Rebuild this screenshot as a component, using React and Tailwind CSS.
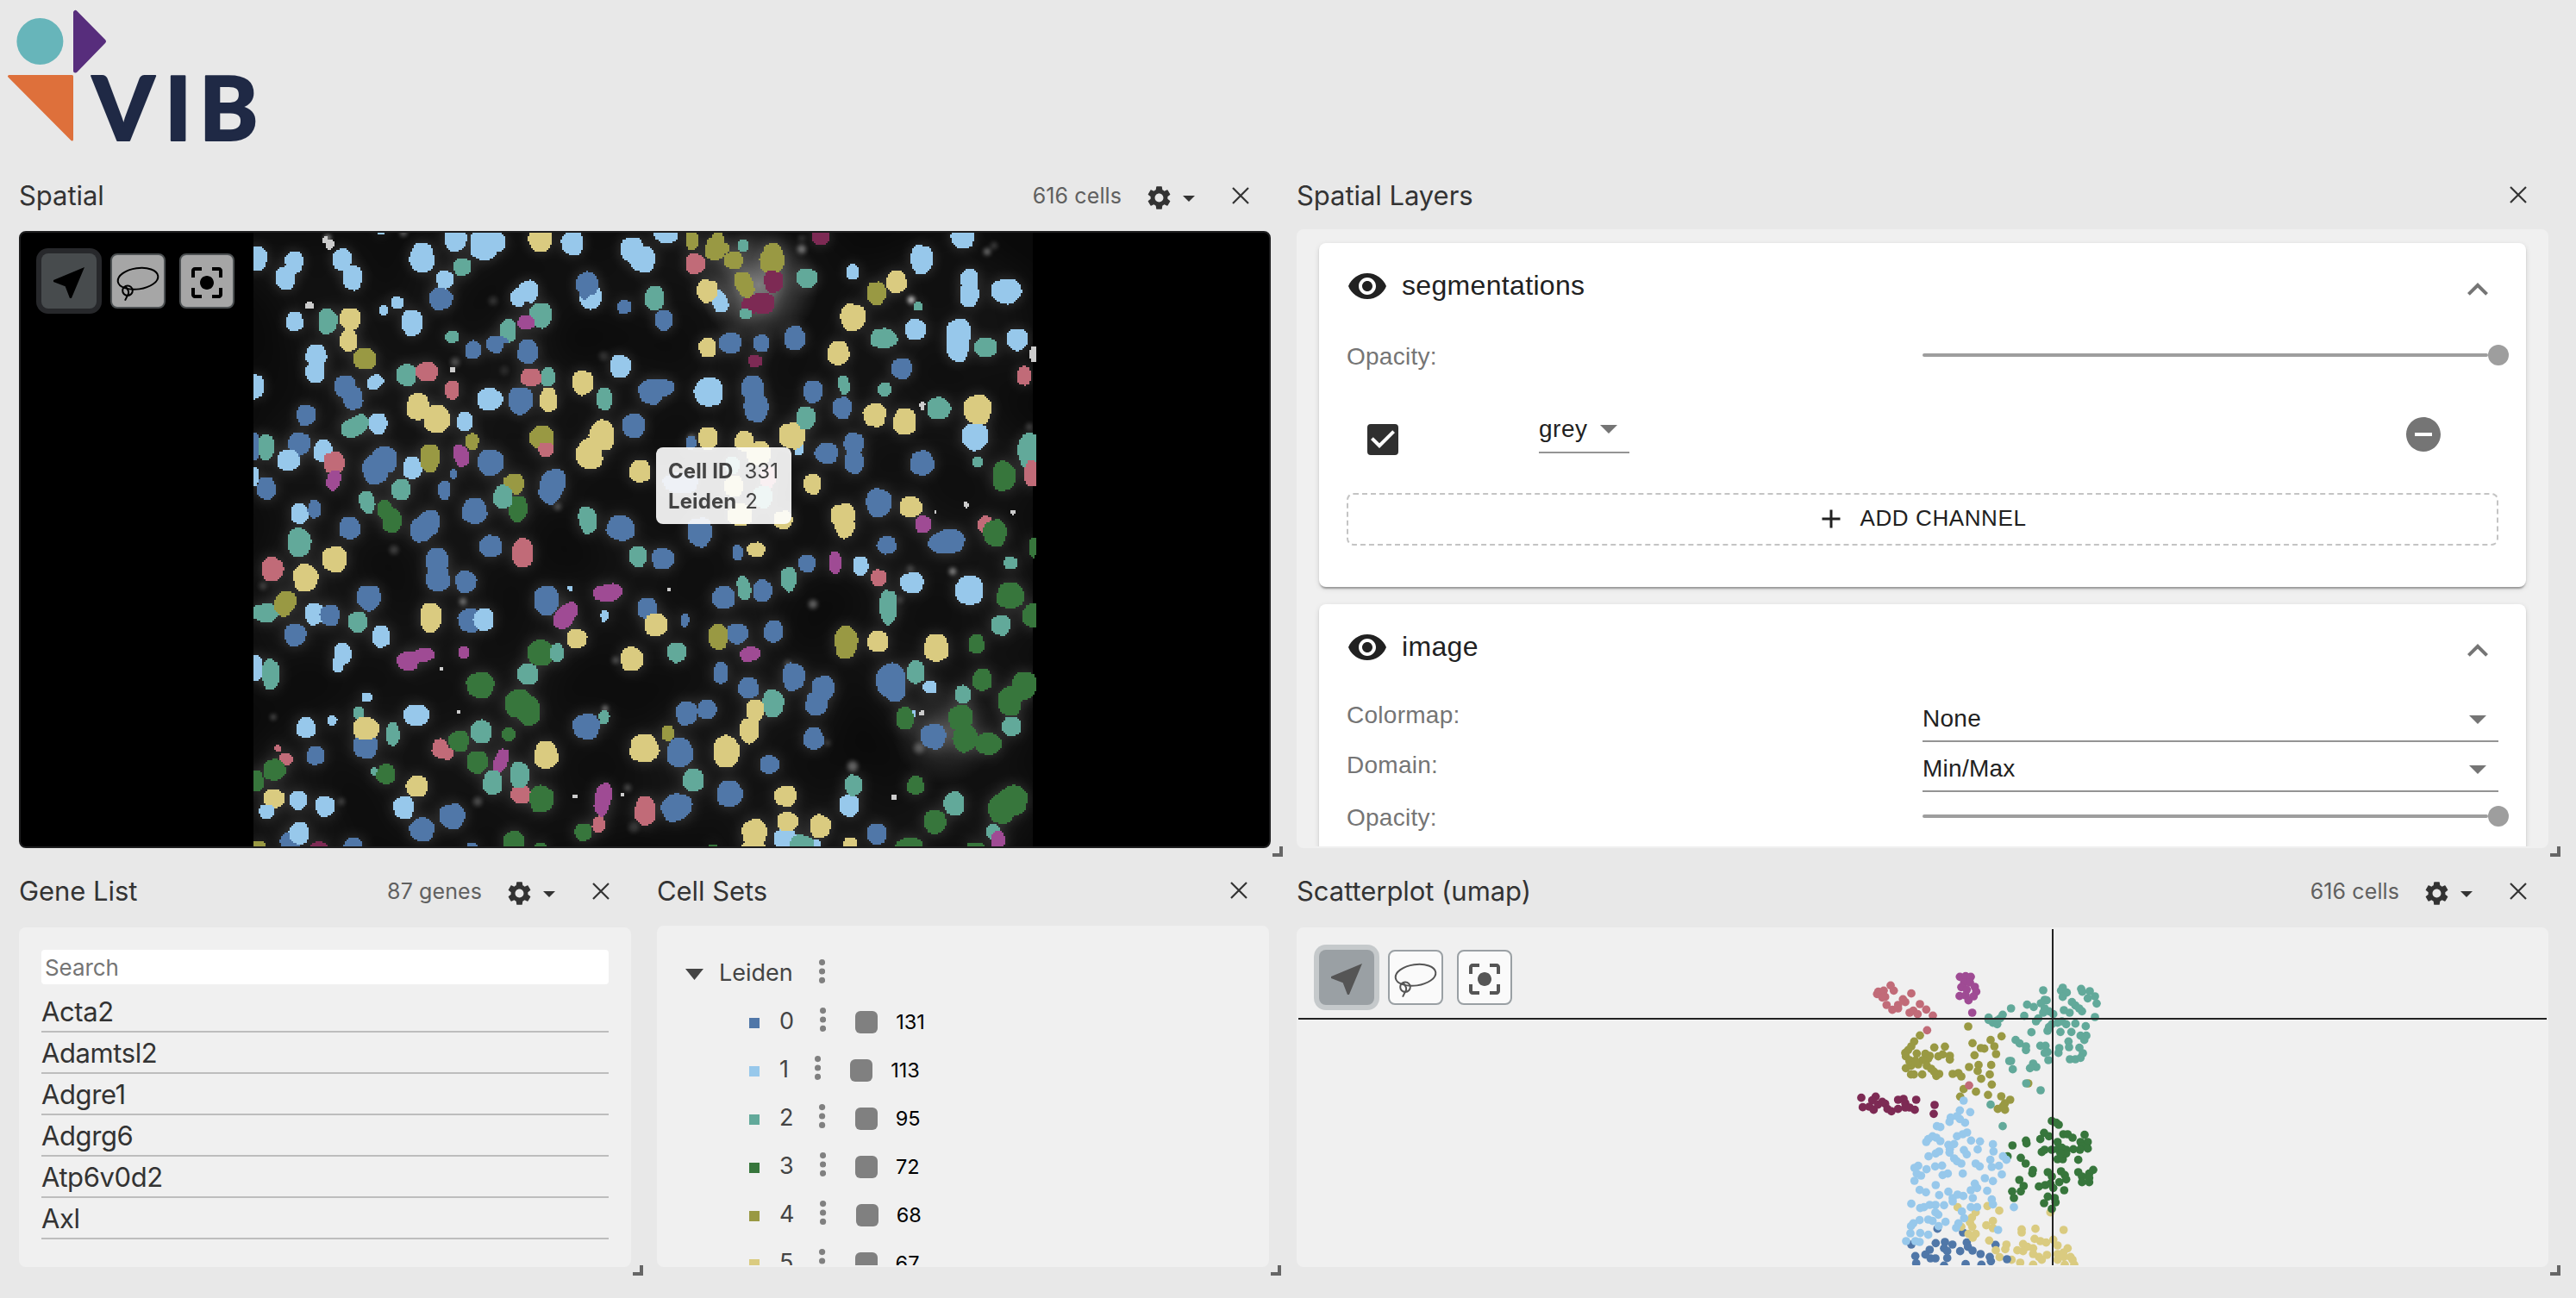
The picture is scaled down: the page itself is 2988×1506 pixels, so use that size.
import React from "react";
import {
  MdNearMe,
  MdCenterFocusStrong,
  MdSettings,
  MdVisibility,
  MdExpandLess,
  MdCheckBox,
  MdArrowDropDown,
  MdRemoveCircle,
  MdAdd,
} from "react-icons/md";

const COLORS = {
  B: "#5077a8",
  L: "#97c8eb",
  T: "#62a99a",
  G: "#37763c",
  O: "#999943",
  Y: "#dacb80",
  R: "#c16b78",
  P: "#9f4b94",
  M: "#7d2a54",
  W: "#cccccc",
};

/* Cell outlines per image tile: colour, centre x, centre y, radius x, radius y, rotation (thirds of a pixel). */
const TILES = [
  {
    x: 280,
    y: 260,
    cells:
      "L,46,120,44,42;L,184,132,31,37;L,154,187,34,41;W,308,70,14,18;W,292,56,10,12;L,351,124,33,39;L,387,187,34,42;L,486,20,18,16;L,629,117,42,51;L,745,50,37,45;L,845,65,49,61;L,880,62,38,38;Y,1040,50,39,46;L,1152,65,37,42;L,1360,90,40,43;L,1396,122,44,44;T,768,149,31,30;L,708,193,30,32;B,694,260,40,38;L,962,255,25,32;L,1000,234,33,38;L,1215,254,39,40;B,1203,208,38,41;B,1193,240,17,22;B,1333,288,24,24;W,237,284,15,12;L,185,339,30,33;T,300,338,33,44;Y,379,331,36,38;Y,372,405,30,38;L,543,273,21,22;L,494,299,15,18;L,594,344,36,45;L,260,456,36,37;L,257,514,34,37;O,429,469,39,37;T,733,392,23,21;B,807,438,27,32;T,928,370,28,41;B,883,418,30,30;B,905,405,24,12;T,1042,317,38,43;P,991,342,30,24;B,997,444,35,42;T,574,525,34,38;R,645,514,38,33;R,733,578,25,33;W,734,507,9,9;R,1008,534,36,31;T,1068,532,24,34;Y,1188,552,36,42;L,1319,495,36,40;T,1264,608,27,39;B,361,566,37,38;B,389,606,33,40;L,465,550,30,24,-30;L,50,565,28,42;B,225,665,33,36;Y,615,636,40,46;Y,681,678,45,48;L,864,609,43,38;B,971,614,42,47;Y,1068,612,30,42;T,395,704,52,32,-30;L,475,695,32,36;L,777,687,27,33;B,1365,702,39,42;Y,1254,736,42,53;Y,1212,800,46,52;O,1045,743,41,41;R,1060,785,27,25;B,50,775,14,48;T,86,777,28,44;B,201,765,38,40;L,164,822,39,36;L,285,790,34,38;R,323,832,36,40;P,321,891,24,34,15;B,497,820,44,46;B,467,855,45,50;L,595,848,32,39;O,656,815,34,48;P,765,806,26,39,-15;O,803,757,23,28;B,867,830,45,45;B,739,870,12,16;L,48,878,12,32;B,87,920,32,39;Y,1387,860,36,39;T,555,924,33,36;B,706,926,21,33;G,962,990,32,46;O,948,904,36,35;T,910,950,34,40;B,1081,912,42,62,20;T,437,968,26,39,-15;G,499,993,26,33;G,524,1032,33,42;L,203,1007,30,35;B,254,992,22,32;B,377,1058,36,39;B,811,999,43,44;B,655,1038,36,43;B,625,1065,37,42;T,1205,1030,31,47,-10;B,1320,1058,48,43,15",
  },
  {
    x: 740,
    y: 260,
    cells:
      "L,98,30,40,36;O,189,55,21,35;O,278,60,20,42;O,268,86,34,40;O,296,84,22,20;T,366,75,18,21;O,332,126,33,30;O,470,105,32,39;O,466,130,43,40;R,200,138,34,35;M,472,200,33,38;M,430,275,46,36;M,390,285,30,30;T,375,312,21,18;O,370,210,30,48,-25;M,636,45,30,27;T,588,189,36,33;L,285,270,26,40,-20;Y,241,232,36,39;T,57,257,33,42;B,90,336,30,36;Y,243,430,30,34;B,321,413,39,36;B,429,415,27,30;B,546,397,36,41;M,408,477,24,21;L,747,166,21,27;L,987,123,38,50;L,1130,45,39,39;Y,899,201,35,39;O,830,240,33,40;T,975,286,16,15;L,1153,192,31,36;L,1153,244,32,44;L,1282,234,52,42;Y,748,324,43,46;T,855,398,46,34;L,966,367,36,36;L,1116,382,42,52;L,1113,425,39,54;T,1210,429,39,33;L,1320,402,37,37;W,1376,453,12,27;R,1344,528,24,33;Y,697,449,37,42;B,918,503,35,36;T,717,560,19,33,-10;T,857,575,24,24;B,46,583,42,44;B,82,570,44,30;L,246,584,48,50;B,399,570,39,42;B,412,640,42,49;B,609,583,33,39;B,711,640,33,38;L,560,782,18,22;Y,537,736,46,45;T,584,675,33,39;Y,824,664,39,41;Y,928,687,40,46;W,990,631,9,15;T,1047,642,40,38;L,1173,740,45,46;Y,1182,645,48,51;T,1370,790,48,62;R,1370,868,25,46;B,185,762,18,24;Y,244,746,33,39;Y,370,756,33,34;Y,420,798,42,42;B,656,797,39,36;B,751,765,34,38;B,753,830,33,39;B,989,832,41,42;T,1183,828,18,20;G,1273,877,40,51;T,328,840,25,30;R,452,880,28,38;B,150,900,60,36;Y,333,912,33,36;T,435,950,33,38;Y,355,1012,42,38;Y,505,1030,33,32;Y,608,905,30,36;B,838,970,44,49;Y,950,984,38,36;Y,714,1015,42,42;Y,720,1050,33,42;P,992,1045,28,30;W,1142,977,8,12;W,1305,1003,8,8;W,1034,1001,3,6;R,1208,1045,26,28;G,1243,1075,40,46;B,215,1072,43,50;B,1065,1110,52,38;B,1090,1103,45,42",
  },
  {
    x: 280,
    y: 620,
    cells:
      "T,201,28,40,49;B,867,41,39,37;R,978,65,36,50;R,108,121,37,41;Y,325,87,42,45;Y,223,151,42,48;T,84,273,46,32;O,152,240,35,44,25;L,254,277,33,37;B,308,281,33,36;B,443,220,41,44;B,187,350,37,39;T,405,306,33,36;L,486,356,31,38;L,352,415,30,37;L,336,452,20,28;B,681,90,39,43;B,684,152,41,46;B,781,165,36,38;Y,659,289,37,51;B,793,299,38,41;L,843,296,34,39;L,50,465,24,45;T,102,487,30,53;P,580,440,38,33;P,630,421,42,23,-10;P,774,411,18,21;W,696,468,6,6;G,832,524,47,45;G,965,590,47,50;G,1000,615,40,50;G,1040,412,44,44;T,1099,412,24,31;T,996,486,36,36;B,1062,230,43,51;P,1128,283,32,52,40;L,1144,188,9,9;P,1276,203,51,30,-8;L,1264,284,13,20;Y,1167,363,34,33;Y,1359,434,39,42;T,1380,77,31,36;L,436,567,18,16;T,408,622,18,22;B,432,738,42,41;Y,434,675,45,39;L,609,630,44,36;T,527,695,23,41;L,225,672,33,35;L,316,647,16,19;R,126,744,12,11;R,155,782,23,21;B,258,770,31,32;G,115,820,38,36;G,50,858,27,36;T,461,824,11,14;G,503,835,32,34;R,692,745,28,33;R,716,764,22,20;G,757,719,35,36;T,834,687,36,40;G,930,696,24,22;G,821,793,37,38;P,903,790,23,46,20;T,874,864,33,42;R,972,905,34,32;T,968,838,33,46;G,1044,921,42,46;Y,1060,768,41,48;B,1201,669,46,44;T,1262,637,18,25;W,1160,912,9,6;W,755,619,6,6;P,1258,922,28,58,12;R,1243,1010,22,28;G,1190,1036,30,30;Y,114,920,36,33;L,88,965,27,25;L,198,926,30,33;L,291,946,34,35;Y,611,877,36,38;L,566,950,35,39;B,734,981,44,43;B,629,1027,42,40;B,172,1070,35,35;L,201,1040,34,38;O,60,1088,26,20;M,270,1090,30,20;B,390,1090,33,34;G,948,1070,36,38;B,801,1090,20,16;G,1040,1090,20,16;W,1326,906,6,6",
  },
  {
    x: 740,
    y: 620,
    cells:
      "B,87,84,39,37;B,348,63,18,27;Y,411,53,31,25;Y,718,-5,24,17;B,866,38,33,31;G,1374,45,14,34;T,1297,99,24,22;B,589,101,30,30;P,687,98,21,39;L,775,110,26,34;R,838,152,27,29;L,954,168,40,36;L,1153,194,48,50;G,1296,213,47,45;T,525,156,27,42;T,368,186,23,42,-10;B,298,220,39,39;B,434,196,33,38;W,106,192,6,6;B,32,258,34,36;Y,63,314,39,39;B,163,299,14,24;T,871,252,30,59;G,1378,282,40,42;T,1263,316,34,35;B,345,346,38,34;O,279,356,33,44;B,472,338,33,38;O,724,375,39,56;Y,834,373,36,37;Y,1038,395,42,48;G,1178,382,27,34;T,135,411,33,34;P,390,417,35,25,-15;B,288,482,25,38;B,541,495,39,47;B,384,534,36,36;B,645,535,39,43;B,620,590,37,40;B,880,510,50,60;B,896,545,36,37;T,967,480,31,39;L,1017,532,24,22;G,1198,506,33,38;G,1345,525,42,46;G,1295,580,41,50;T,1131,557,27,31;T,470,588,36,48;Y,408,612,31,38;Y,388,683,33,43;B,169,622,37,41;B,240,609,32,34;L,960,623,6,12;G,930,640,30,39;W,988,621,8,9;G,1124,640,42,46;G,1138,710,42,46;G,1220,729,44,37;T,1300,668,33,33;B,1028,703,43,43;Y,22,745,50,48;O,105,692,22,27;B,146,760,45,50;Y,308,756,44,55;B,611,711,35,38;B,458,801,33,31;T,193,855,36,39;B,319,903,44,45;Y,514,911,38,36;L,736,943,34,39;T,750,873,30,36;G,966,874,29,32;W,891,915,9,9;T,1101,937,35,41;G,1305,925,50,50;G,1265,955,45,51;R,25,963,36,50;B,134,950,54,45,-25;Y,406,1040,42,50;Y,403,1085,42,15;L,512,1060,38,38;Y,521,1000,36,32;L,615,1080,22,20;T,570,1088,42,42;Y,634,1016,35,40;Y,738,1075,24,20;B,832,1043,34,37;G,1033,1001,38,40;G,945,1085,46,30;G,1175,1085,30,14;T,1236,1035,24,26;P,1254,1065,24,32;G,260,1085,16,6",
  },
];

/* Out-of-focus specks: x, y, radius, brightness. */
const SPECKS = [
  [380, 276, 4, 0.5], [468, 270, 4, 0.35], [572, 349, 5, 0.15], [528, 420, 5, 0.25], [585, 430, 5, 0.1],
  [700, 413, 5, 0.15], [930, 289, 5, 0.4], [930, 277, 4, 0.15], [1057, 348, 4, 0.8], [1145, 292, 4, 0.4], [1153, 285, 4, 0.2],
  [802, 508, 4, 0.3], [457, 638, 5, 0.2], [537, 698, 4, 0.4], [305, 680, 4, 0.2],
  [317, 832, 3, 0.3], [702, 822, 3, 0.5], [714, 766, 4, 0.25], [554, 930, 5, 0.25], [396, 930, 4, 0.2],
  [728, 914, 4, 0.25], [735, 960, 6, 0.15], [1056, 660, 4, 0.2], [1105, 663, 4, 0.5], [943, 701, 5, 0.35],
  [914, 770, 4, 0.2], [1066, 868, 6, 0.25], [1044, 696, 4, 0.15], [989, 889, 6, 0.35], [960, 862, 3, 0.2], [1194, 495, 4, 0.2],
  [647, 588, 4, 0.25],
];

const CELLS = TILES.flatMap((t) =>
  t.cells.split(";").map((s) => {
    const [c, x, y, rx, ry, rot = "0"] = s.split(",");
    return { c, x: t.x + x / 3, y: t.y + y / 3, rx: rx / 3, ry: ry / 3, rot: +rot };
  })
);

/* Rasterises a slightly irregular superellipse into runs on the image's 2px pixel grid. */
function pixelPath({ x, y, rx, ry, rot }) {
  const a = (rot * Math.PI) / 180;
  const cos = Math.cos(a);
  const sin = Math.sin(a);
  const seed = x * 1.7 + y * 2.3;
  const h = Math.max(rx, ry) + 2;
  const inside = (px, py) => {
    const dx = px + 1 - x;
    const dy = py + 1 - y;
    const u = (dx * cos + dy * sin) / rx;
    const v = (-dx * sin + dy * cos) / ry;
    const t = Math.atan2(v, u);
    const edge = 1.02 + 0.035 * Math.sin(3 * t + seed) + 0.025 * Math.sin(5 * t + seed * 2);
    return Math.abs(u) ** 2.25 + Math.abs(v) ** 2.25 <= edge ** 2.25;
  };
  let d = "";
  for (let py = Math.floor((y - h) / 2) * 2; py < y + h; py += 2) {
    let start = null;
    for (let px = Math.floor((x - h) / 2) * 2; px < x + h + 2; px += 2) {
      const hit = inside(px, py);
      if (hit && start === null) start = px;
      if (!hit && start !== null) {
        d += `M${start} ${py}h${px - start}v2h${start - px}z`;
        start = null;
      }
    }
  }
  return d;
}

/* Embedding points per cluster, in thirds of a pixel. */
const POINTS = [
  ["R", "219,250;176,272;195,268;172,280;200,290;230,268;190,292;205,318;225,335;245,318;262,298;245,330;270,308;291,278;285,345;298,338;313,350;321,315;343,334;366,355;346,406"],
  ["P", "460,220;480,218;498,220;475,240;495,240;465,256;512,255;517,272;484,265;459,287;480,285;490,302;508,288;503,345"],
  ["O", "489,393;605,427;504,451;567,440;580,462;545,470;533,468;586,489;511,493;525,527;492,534;569,527;522,548;564,560;534,575;571,595;516,620;558,631;473,611;461,637;604,636;635,648;617,660;592,680;617,683;610,670;321,424;301,445;291,462;280,475;270,485;272,497;285,510;310,487;371,466;408,463;340,488;355,495;385,497;400,490;425,495;425,508;350,505;330,510;272,538;290,530;315,525;285,515;345,530;360,540;290,560;300,560;329,560;378,565;388,558;370,550;435,558;455,555;465,567;305,512;698,591"],
  ["R", "492,598"],
  ["M", "117,641;167,637;155,650;122,674;145,672;160,683;175,665;190,655;200,662;208,680;222,688;245,680;245,648;264,645;270,660;285,675;303,683;308,648;372,666;369,697;270,675"],
  ["B", "382,1097;471,1110;291,1152;584,1153;376,1147;408,1143;434,1152;405,1165;416,1175;355,1170;340,1187;358,1200;375,1200;416,1199;305,1192;308,1217;484,1145;488,1160;504,1173;461,1175;532,1185;564,1195;568,1210;535,1222;480,1220;405,1225"],
  ["Y", "452,1022;556,1018;597,1034;515,1040;502,1058;495,1075;503,1090;490,1115;515,1115;505,1128;552,1085;575,1070;575,1095;562,1138;585,1172;598,1196;622,1152;618,1168;675,1099;675,1110;723,1097;775,1040;821,1101;785,1135;720,1132;740,1140;760,1145;680,1150;695,1160;715,1165;660,1172;680,1175;715,1185;735,1195;763,1188;745,1205;640,1205;670,1215;800,1155;835,1165;820,1180;845,1195;800,1185;800,1205;822,1195;852,1205;715,1222;858,1222;825,1222;465,1090"],
  ["B", "624,1203"],
  ["G", "780,722;795,728;804,735;753,763;740,785;770,775;690,790;692,800;643,807;820,768;835,768;852,780;800,795;894,770;880,795;905,795;885,810;905,818;878,822;745,830;755,822;780,822;800,820;815,815;830,822;855,820;800,855;818,855;830,835;872,857;626,845;672,850;689,870;714,893;712,904;766,900;780,915;812,897;825,910;830,925;806,935;872,900;924,892;910,905;885,915;885,935;910,935;910,920;667,927;682,948;672,967;642,967;648,990;735,950;757,945;775,940;785,955;823,963;766,985;753,1008;790,990;793,1005;780,1028;810,835"],
  ["L", "473,651;460,685;496,691;428,710;450,705;424,725;478,728;460,715;380,740;392,743;485,762;470,768;450,775;365,775;350,785;343,795;378,780;392,792;499,790;530,793;575,803;522,821;420,805;440,802;425,820;424,832;474,823;484,838;388,828;376,835;351,845;577,828;566,857;610,845;622,857;440,852;450,862;465,870;515,870;529,880;571,882;596,878;398,877;374,880;344,890;315,878;302,885;325,912;310,905;302,930;400,910;418,905;470,905;606,908;547,921;575,931;376,945;512,940;520,955;498,963;555,965;320,962;342,970;388,980;420,968;435,990;452,978;472,983;505,990;571,995;575,1012;291,1010;405,1015;648,1022;322,1025;335,1022;355,1014;375,1014;498,1022;520,1022;467,1037;375,1040;385,1048;475,1060;455,1078;447,1094;410,1073;350,1065;365,1070;320,1067;298,1078;290,1088;386,1088;593,1101;288,1113;322,1112;350,1118;273,1140;305,1140;320,1143;435,1002"],
  ["T", "750,267;818,258;812,268;832,275;818,290;882,262;886,272;912,270;930,288;936,313;905,295;850,308;862,320;885,340;875,330;755,300;762,302;742,312;717,325;694,317;750,345;770,340;785,350;755,330;684,356;638,330;609,352;600,365;560,362;575,380;590,385;560,370;590,372;725,375;733,365;822,336;842,345;930,360;780,385;800,380;815,375;830,385;862,383;898,392;810,412;765,408;848,412;880,425;900,425;893,440;709,413;838,445;654,440;668,452;690,462;690,475;740,460;758,460;765,482;755,485;768,510;806,468;803,485;840,465;876,467;888,486;843,507;862,507;880,502;638,513;632,513;644,542;715,522;726,534;704,538;691,591;741,615;567,665;609,740;770,395"],
];

const GENES = ["Acta2", "Adamtsl2", "Adgre1", "Adgrg6", "Atp6v0d2", "Axl"];
const SETS = [
  ["0", 131, "bg-[#5077a8]"],
  ["1", 113, "bg-[#97c8eb]"],
  ["2", 95, "bg-[#62a99a]"],
  ["3", 72, "bg-[#37763c]"],
  ["4", 68, "bg-[#999943]"],
  ["5", 67, "bg-[#dacb80]"],
];

function Logo() {
  return (
    <svg width="320" height="192" viewBox="0 0 320 192">
      <circle cx="46.4" cy="48" r="27" fill="#67b5ba" />
      <path d="M87.5 14.5V82L120.5 48Z" fill="#572d7c" stroke="#572d7c" strokeWidth="5" strokeLinejoin="round" />
      <path d="M10.5 88.5H83.5V162Z" fill="#de703b" stroke="#de703b" strokeWidth="3" strokeLinejoin="round" />
      <text
        x="107 191 231"
        y="162.5"
        fontFamily="Lato, sans-serif"
        fontWeight="900"
        fontSize="103"
        fill="#1f2945"
        stroke="#1f2945"
        strokeWidth="2"
        strokeLinejoin="round"
      >
        VIB
      </text>
    </svg>
  );
}

function Title({ children, info, closeUp }) {
  return (
    <header className="flex h-[70px] shrink-0 items-center pr-[25px] text-[#333]">
      <h2 className="grow text-[31px] tracking-[-0.05px]">{children}</h2>
      {info && (
        <div className="flex items-center">
          <span className="mt-0.5 text-[25px] tracking-[0.1px] text-[#606060]">{info}</span>
          <MdSettings className="mt-[5px] ml-[27px] size-[33px]" />
          <svg className="mt-[7px] ml-[11px] h-[7px] w-[14px]" viewBox="0 0 14 7">
            <path d="M0 0H14L7 7Z" fill="currentColor" />
          </svg>
        </div>
      )}
      <svg className={closeUp ? "ml-[43px] -mt-[2px] size-5" : "ml-[43px] size-5"} viewBox="0 0 20 20">
        <path d="M1 1L19 19M19 1L1 19" stroke="currentColor" strokeWidth="2.2" />
      </svg>
    </header>
  );
}

function Handle() {
  return <i className="absolute -right-[14px] -bottom-[10px] size-3 border-r-4 border-b-4 border-[#666]" />;
}

function Lasso() {
  return (
    <svg className="size-[60px]" viewBox="2 2 60 60" fill="none" stroke="currentColor" strokeWidth="2">
      <ellipse cx="32" cy="29.3" rx="23.5" ry="12.2" transform="rotate(-8 32 29.3)" />
      <circle cx="20" cy="43.2" r="5.8" />
      <path d="M17.2 37.8C21 42 22 46 20.2 48.4L17 54.6" />
    </svg>
  );
}

function Tools({ dark }) {
  const on = dark
    ? "bg-[#474b4d] text-black ring-[#27282b]"
    : "bg-[#9aa0a4] text-[#555] ring-[#c5c9cb]";
  const off = dark
    ? "border-[#4c5052] bg-[#a6a6a6] text-black"
    : "border-[#9aa0a4] bg-[#fafafa] text-[#555]";
  return (
    <div className="absolute top-6 left-6 flex gap-4">
      <button className={`flex size-16 justify-center rounded-lg pt-[10px] ring-6 ${on}`}>
        <MdNearMe className="size-12" />
      </button>
      <button className={`size-16 rounded-lg border-2 ${off}`}>
        <Lasso />
      </button>
      <button className={`flex size-16 justify-center rounded-lg border-2 pt-2 ${off}`}>
        <MdCenterFocusStrong className="size-12" />
      </button>
    </div>
  );
}

function Spatial() {
  return (
    <section className="relative flex flex-col">
      <Title info="616 cells">Spatial</Title>
      <div className="relative mt-[6px] grow overflow-hidden rounded-lg border-2 border-[#1e1e1f] bg-black">
        <svg className="block" width="1448" height="712" viewBox="24 270 1448 712" shapeRendering="crispEdges">
          <defs>
            <clipPath id="img">
              <rect x="294" y="270" width="904" height="712" />
            </clipPath>
            <clipPath id="seg">
              <rect x="294" y="270" width="908" height="712" />
            </clipPath>
            <filter id="glow" x="-5%" y="-5%" width="110%" height="110%">
              <feGaussianBlur stdDeviation="8" />
            </filter>
            <filter id="haze" x="-5%" y="-5%" width="110%" height="110%">
              <feGaussianBlur stdDeviation="26" />
            </filter>
            <filter id="soft">
              <feGaussianBlur stdDeviation="2.5" />
            </filter>
            <radialGradient id="halo">
              <stop offset="0" stopColor="#fff" stopOpacity="0.4" />
              <stop offset="0.45" stopColor="#fff" stopOpacity="0.18" />
              <stop offset="1" stopColor="#fff" stopOpacity="0" />
            </radialGradient>
          </defs>
          <g clipPath="url(#img)">
            <rect x="294" y="270" width="904" height="712" fill="#0a0a0a" />
            <g filter="url(#haze)" fill="#fff" opacity="0.07">
              {CELLS.map((c, i) => (
                <circle key={i} cx={c.x} cy={c.y} r={c.rx + 6} />
              ))}
            </g>
            <g filter="url(#glow)" fill="#fff" opacity="0.17">
              {CELLS.filter((c) => c.c !== "W").map((c, i) => (
                <ellipse key={i} cx={c.x} cy={c.y} rx={c.rx + 1} ry={c.ry + 1} />
              ))}
            </g>
            <circle cx="880" cy="330" r="70" fill="url(#halo)" />
            <circle cx="1095" cy="850" r="60" fill="url(#halo)" opacity="0.5" />
            <g filter="url(#soft)">
              {SPECKS.map(([x, y, r, o], i) => (
                <circle key={i} cx={x} cy={y} r={r} fill="#fff" opacity={o} />
              ))}
            </g>
          </g>
          <g clipPath="url(#seg)">
            {CELLS.map((c, i) => (
              <path key={i} d={pixelPath(c)} fill={COLORS[c.c]} />
            ))}
          </g>
        </svg>
        <Tools dark />
        <div className="absolute top-[249px] left-[737px] h-[89px] w-[157px] rounded-lg bg-white/90 pt-[10px] pl-[14px] text-[24px] leading-[35px] text-[#444]">
          <p>
            <b className="mr-[13px] font-bold tracking-[0.1px]">Cell ID</b>331
          </p>
          <p>
            <b className="mr-[10px] font-bold tracking-[0.1px]">Leiden</b>2
          </p>
        </div>
      </div>
      <Handle />
    </section>
  );
}

function Card({ name, className, children }) {
  return (
    <div
      className={`rounded-lg bg-white px-8 shadow-[0_4px_2px_-2px_rgba(0,0,0,0.2),0_2px_2px_0_rgba(0,0,0,0.14),0_2px_6px_0_rgba(0,0,0,0.12)] ${className}`}
    >
      <div className="flex h-[100px] items-center text-[#212121]">
        <MdVisibility className="size-12" />
        <span className="-mt-[2px] ml-4 grow text-[32px] tracking-[0.33px]">{name}</span>
        <MdExpandLess className="mt-2 size-12 text-[#757575]" />
      </div>
      {children}
    </div>
  );
}

function Slider() {
  return (
    <div className="flex h-6 w-[680px] items-center">
      <span className="h-1 w-[656px] rounded-full bg-[#9e9e9e]" />
      <span className="size-6 rounded-full bg-[#9e9e9e]" />
    </div>
  );
}

function Layers() {
  return (
    <section className="relative flex flex-col">
      <Title closeUp>Spatial Layers</Title>
      <div className="mt-1 h-[718px] overflow-hidden rounded-lg border-2 border-[#f0f0f0] bg-[#f0f0f0] px-6 pt-[14px] font-['Liberation_Sans',sans-serif] text-[28px] tracking-[0.26px] text-[#212121]">
        <Card name="segmentations" className="h-[399px]">
          <div className="-mr-3 flex h-[60px] items-center justify-between">
            <span className="mt-[3px] text-[#757575]">Opacity:</span>
            <Slider />
          </div>
          <div className="mt-[2px] flex h-32 items-start">
            <MdCheckBox className="mt-[42px] ml-[18px] size-12 text-[#2f2f2f]" />
            <div className="mt-7 ml-[157px] flex h-[54px] w-[105px] items-start justify-between border-b-2 border-[#949494]">
              <span className="mt-[5px] tracking-[0.5px]">grey</span>
              <MdArrowDropDown className="mt-[1px] -ml-1 size-12 shrink-0 text-[#757575]" />
            </div>
            <MdRemoveCircle className="mt-9 mr-[63px] ml-auto size-12 text-[#757575]" />
          </div>
          <button className="flex h-[61px] w-full items-center justify-center rounded-lg border-2 border-dashed border-[#c4c4c4] pr-1 pb-[2px] text-[26px] tracking-[0.6px]">
            <MdAdd className="mr-4 size-9" />
            ADD CHANNEL
          </button>
        </Card>
        <Card name="image" className="mt-5 h-[420px]">
          <div className="flex h-[60px] items-center justify-between">
            <span className="pb-[2px] text-[#757575]">Colormap:</span>
            <div className="flex h-full w-[668px] items-center justify-between border-b-2 border-[#949494] pt-[7px]">
              None
              <MdArrowDropDown className="size-12 text-[#757575]" />
            </div>
          </div>
          <div className="flex h-[58px] items-center justify-between">
            <span className="pb-[5px] text-[#757575]">Domain:</span>
            <div className="flex h-full w-[668px] items-center justify-between border-b-2 border-[#949494] pt-[5px]">
              Min/Max
              <MdArrowDropDown className="size-12 text-[#757575]" />
            </div>
          </div>
          <div className="-mr-3 flex h-[56px] items-center justify-between">
            <span className="mt-[3px] text-[#757575]">Opacity:</span>
            <Slider />
          </div>
        </Card>
      </div>
      <Handle />
    </section>
  );
}

function GeneList() {
  return (
    <section className="relative flex h-[471px] flex-col">
      <Title info="87 genes">Gene List</Title>
      <div className="mt-[7px] grow rounded-lg bg-[#f0f0f0] px-[26px] pt-[26px]">
        <div className="mb-2 flex h-10 items-center rounded bg-white pl-1 text-[26px] tracking-[-0.1px] text-[#757575]">Search</div>
        {GENES.map((g) => (
          <div key={g} className="flex h-12 items-center border-b-2 border-[#bdbdbd] pt-[3px] text-[31px] tracking-[-0.4px] text-[#333]">
            {g}
          </div>
        ))}
      </div>
      <Handle />
    </section>
  );
}

function Dots({ className }) {
  return (
    <svg className={`h-7 w-[7.2px] ${className}`} viewBox="0 0 7.2 28" fill="#808080">
      <circle cx="3.6" cy="3.6" r="3.6" />
      <circle cx="3.6" cy="14" r="3.6" />
      <circle cx="3.6" cy="24.4" r="3.6" />
    </svg>
  );
}

function CellSets() {
  return (
    <section className="relative flex h-[471px] flex-col">
      <Title closeUp>Cell Sets</Title>
      <div className="mt-[5px] h-[396px] overflow-hidden rounded-lg border-2 border-[#f0f0f0] bg-[#f0f0f0] pt-6 text-[#444]">
        <div className="flex h-14 items-center pl-[31px]">
          <svg className="mt-[5px] h-[13px] w-[21px]" viewBox="0 0 21 13">
            <path d="M0 0H21L10.5 13Z" fill="currentColor" />
          </svg>
          <span className="mt-[2px] ml-[18px] w-[116px] text-[27px]">Leiden</span>
          <Dots className="-mt-[2px]" />
        </div>
        {SETS.map(([name, count, bg]) => (
          <div key={name} className="flex h-14 items-center pl-[105px]">
            <span className={`mt-[6px] size-3 ${bg}`} />
            <span className="mt-[2px] ml-[23px] text-[27px]">{name}</span>
            <Dots className="-mt-[2px] ml-[30px]" />
            <span className="mt-[4px] ml-[34px] size-[26px] rounded-[6px] bg-[#808080]" />
            <span className="mt-[3px] ml-[21px] text-[23.5px] text-black">{count}</span>
          </div>
        ))}
      </div>
      <Handle />
    </section>
  );
}

function Scatterplot() {
  return (
    <section className="relative flex h-[471px] flex-col">
      <Title info="616 cells">Scatterplot (umap)</Title>
      <div className="relative mt-[7px] grow overflow-hidden rounded-lg border-2 border-[#f0f0f0] bg-[#f0f0f0]">
        <svg className="block" width="1448" height="390" viewBox="1506 1078 1448 390">
          <g transform="translate(2120 1060) scale(0.33333)">
            {POINTS.map(([c, list], i) => (
              <g key={i} fill={COLORS[c]}>
                {list.split(";").map((p, j) => {
                  const [x, y] = p.split(",");
                  return <circle key={j} cx={x} cy={y} r="14.6" />;
                })}
              </g>
            ))}
          </g>
          <path d="M2381 1078V1468M1506 1182H2954" stroke="#222" strokeWidth="2" />
        </svg>
        <Tools />
      </div>
      <Handle />
    </section>
  );
}

export default function App() {
  return (
    <main className="h-[1506px] w-[2988px] overflow-hidden bg-[#e8e8e8] font-['Inter',sans-serif]">
      <div className="h-48">
        <Logo />
      </div>
      <div className="grid grid-cols-[1452px_1452px] grid-rows-[792px_471px] gap-x-[30px] gap-y-[15px] pl-[22px]">
        <Spatial />
        <Layers />
        <div className="grid grid-cols-[710px_710px] justify-between pr-[2px]">
          <GeneList />
          <CellSets />
        </div>
        <Scatterplot />
      </div>
    </main>
  );
}
